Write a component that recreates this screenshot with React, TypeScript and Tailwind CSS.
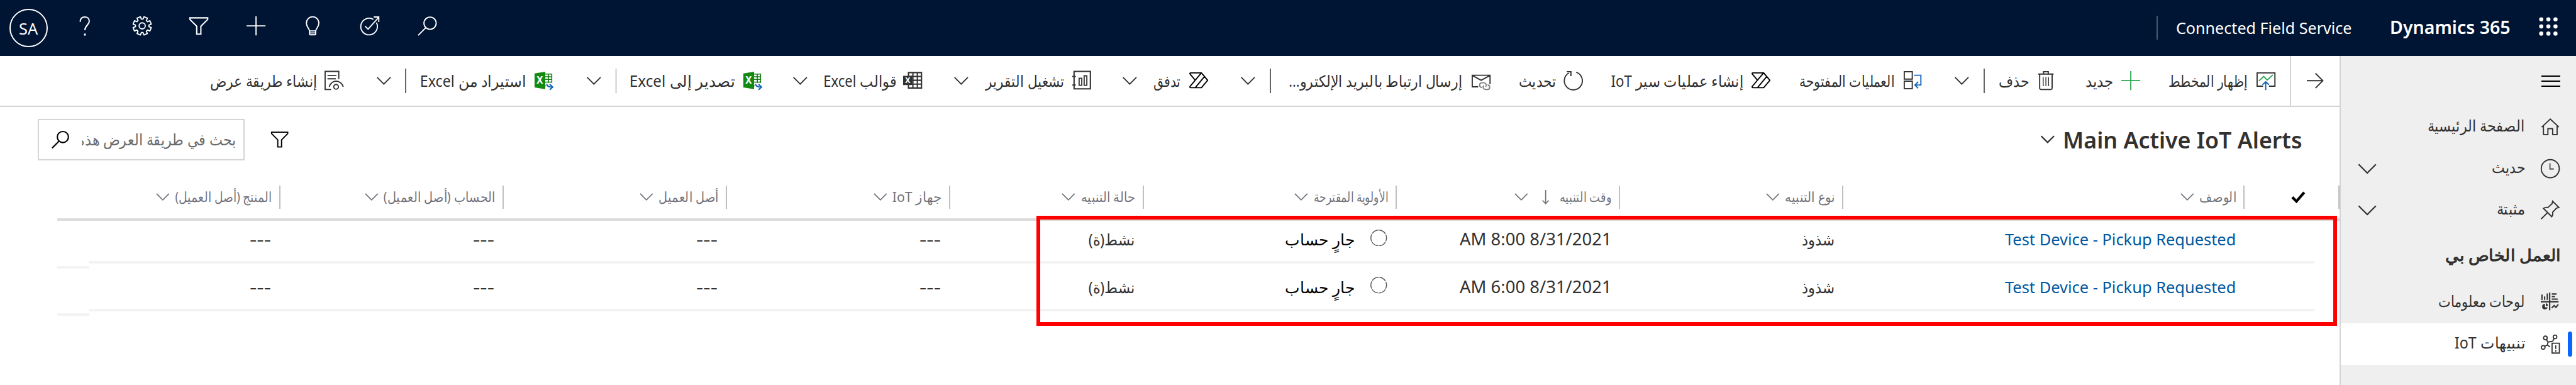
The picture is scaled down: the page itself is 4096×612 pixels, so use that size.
import { useLayoutEffect, useRef } from "react";
import type { ReactNode } from "react";

/* One line of text that is condensed or stretched to the width of its box. */
function Fit({ className, ltr, children }: { className: string; ltr?: boolean; children: ReactNode }) {
  const box = useRef<HTMLSpanElement>(null);
  const line = useRef<HTMLSpanElement>(null);
  useLayoutEffect(() => {
    if (!box.current || !line.current) return;
    line.current.style.transform = "none";
    const natural = line.current.getBoundingClientRect().width;
    const wanted = box.current.getBoundingClientRect().width;
    if (natural > 0) line.current.style.transform = `scaleX(${wanted / natural})`;
  }, []);
  return (
    <span ref={box} dir={ltr ? "ltr" : "rtl"} className={`block shrink-0 whitespace-nowrap ${className}`}>
      <span ref={line} className={ltr ? "inline-block origin-left" : "inline-block origin-right"}>
        {children}
      </span>
    </span>
  );
}

function Icon({ className = "size-8", sw = 2, children }: { className?: string; sw?: number; children: ReactNode }) {
  return (
    <svg viewBox="0 0 32 32" className={`block shrink-0 overflow-visible ${className}`} fill="none" stroke="currentColor" strokeWidth={sw}>
      {children}
    </svg>
  );
}

function Chevron({ className, sw = 2 }: { className: string; sw?: number }) {
  return (
    <svg viewBox="0 0 24 14" className={`block shrink-0 overflow-visible ${className}`} fill="none" stroke="currentColor" strokeWidth={sw}>
      <path d="M.7 1 12 12.3 23.3 1" />
    </svg>
  );
}

/* ---------- header icons ---------- */

const Gear = () => {
  const pts: string[] = [];
  const teeth = 8;
  for (let i = 0; i < teeth; i++) {
    const c = ((i + 0.5) * 2 * Math.PI) / teeth;
    const at = (r: number, a: number) => `${(16 + r * Math.cos(c + a)).toFixed(2)} ${(16 + r * Math.sin(c + a)).toFixed(2)}`;
    pts.push(at(11.4, -0.27), at(15.6, -0.2), at(15.6, 0.2), at(11.4, 0.27));
  }
  return (
    <Icon>
      <path d={`M${pts.join("L")}Z`} strokeLinejoin="round" />
      <circle cx="16" cy="16" r="5.2" />
    </Icon>
  );
};

const Help = () => (
  <Icon sw={2.2}>
    <path d="M8 9.2C8 3.6 11.3 1 15.6 1 20 1 23.3 3.6 23.3 8c0 6.5-7.4 7.2-7.4 15" />
    <path d="M15.9 29v3.4" strokeWidth="3" />
  </Icon>
);

const Funnel = ({ className }: { className?: string }) => (
  <Icon className={className} sw={2.2}>
    <path d="M1 2.5h30v2.7L19.5 16.7V30h-7V16.7L1 5.2Z" />
  </Icon>
);

const Plus = ({ className }: { className?: string }) => (
  <Icon className={className}>
    <path d="M16 0v32M0 16h32" />
  </Icon>
);

const Bulb = () => (
  <Icon>
    <path d="M12 31h8a1.2 1.2 0 0 0 1.2-1.2V25c0-4 5.3-7 5.3-13.5A10.5 10.8 0 0 0 5.500 11.500C5.500 18 10.800 21 10.800 25v4.800A1.200 1.200 0 0 0 12 31ZM11 24.500h10M11 28h10" />
  </Icon>
);

const Target = () => (
  <Icon>
    <path d="M22 5.2A14 14 0 1 0 27 10.500M8 16.500l5 5L31 1.500M22.500 1H31v8.500" />
  </Icon>
);

const Search = ({ className, sw }: { className?: string; sw?: number }) => (
  <Icon className={className} sw={sw}>
    <circle cx="21" cy="11.5" r="10.3" />
    <path d="M14 19 1 32" />
  </Icon>
);

/* ---------- command bar icons ---------- */

const ShowChart = () => (
  <Icon>
    <path d="M11 25.5H1V3h30v22.5H21" />
    <path d="m4 16.5 8-7.5 6 6L27.5 6.500" stroke="#27a84f" />
    <path d="M15.5 32V18.500M10 23l5.500-5 5.500 5" stroke="#0f62b5" />
  </Icon>
);

const Trash = () => (
  <Icon>
    <path d="M3 5h26M5.5 5v23.5A2.5 2.5 0 0 0 8 31h16a2.5 2.5 0 0 0 2.500-2.500V5M12 5V1h8v4" />
    <path d="M11.5 10v15.5M16 10v15.500M20.500 10v15.500" strokeWidth="1.5" />
  </Icon>
);

const Process = () => (
  <Icon>
    <path d="M2 1h13.5v12.5H2ZM2 17h13.500v12.500H2Z" />
    <path d="M18.5 7H30v16.500H20.500M25.500 18l-5.500 5.500 5.500 5.500" stroke="#0f62b5" />
  </Icon>
);

const Flow = () => (
  <Icon>
    <g stroke="#000" strokeLinejoin="round">
      <path d="M2.5 3H20.5L31 15.5 20.5 28H2.500C1 28 .600 26.500 1.500 25.500L20.200 3.200M2.500 3C1 3 .600 4 1.500 5.200L10 15.300M10.500 27.500 25.500 9.300" />
    </g>
  </Icon>
);

const Refresh = () => (
  <Icon>
    <path d="M20.5 2A15.200 15.200 0 1 1 8 3.200M4.500 1h7v7.500" />
  </Icon>
);

const MailLink = () => (
  <Icon>
    <path d="M11 26.500H1V7h30v15M1.500 7.500 16 15.500l14.500-8" />
    <g stroke="#808080">
      <path d="M17 27.500h-.500a4 4 0 0 1 0-7.800H21a4 4 0 0 1 2.500 6.800" />
      <path d="M27 23.300h.500a4 4 0 0 1 0 7.700H23a4 4 0 0 1-2.500-6.800" />
    </g>
  </Icon>
);

const Report = () => (
  <Icon>
    <path d="M3 .5h27.500v29.500H3Z" strokeWidth="2.2" />
    <path d="M0 9h6M0 23.500h6M11.500 12h4.500v12h-4.500ZM20 8h4.500v16H20Z" />
  </Icon>
);

const ExcelTemplate = () => (
  <Icon>
    <path d="M9 2.500h22v26H9ZM9 9h22M9 15.500h22M9 22h22M16.500 2.500v26M24 2.500v26" strokeWidth="2.2" />
    <path d="M0 8h15.500v15.500H0Z" fill="currentColor" stroke="none" />
    <text x="7.7" y="20.5" textAnchor="middle" fill="#fff" stroke="none" className="text-[13px] font-bold">X</text>
  </Icon>
);

const Excel = () => (
  <Icon>
    <path d="M18 5h11v20H18M23.500 5v17M18 9.500h11M18 14h11M18 18.500h11" stroke="#107c10" strokeWidth="1.6" />
    <path d="M0 4 18 1v29.500L0 27.500Z" fill="#128a12" stroke="none" />
    <text x="8.7" y="21.5" textAnchor="middle" fill="#fff" stroke="none" className="text-[16px] font-bold">X</text>
    <path d="M19 20h13v12H19Z" fill="#fff" stroke="none" />
    <path d="M20.500 21.500c0 4 3 5.500 9.500 5.500M25.500 22l5 5-5 4.500" stroke="#0f62b5" strokeWidth="2.2" />
  </Icon>
);

const CreateView = () => (
  <Icon>
    <path d="M11 31H1V.5h23v13M5 7.500h15M5 13h14" />
    <path d="M8 26.500C9.500 21 14 17 19.500 17S30 21 31.500 26.500" />
    <circle cx="19.5" cy="26.500" r="4" />
  </Icon>
);

/* ---------- site map icons ---------- */

const Home = () => (
  <Icon>
    <path d="M1.500 16 16 2.500 30.500 16M4.500 13.500V28.500H12V18.500h8v10h7.500V13.500" />
  </Icon>
);

const Clock = () => (
  <Icon>
    <circle cx="16" cy="16" r="15.2" />
    <path d="M15.500 7v9.500H22" strokeWidth="1.7" />
  </Icon>
);

const Pin = () => (
  <Icon>
    <path d="M.5 31 11 20.500M20 1l10.500 10.500-4 1-6.500 7c.500 3 0 5.500-1.500 7.500L4.500 13c2-1.500 4.500-2 7.500-1.500l7-6.500Z" />
  </Icon>
);

const Dashboards = () => (
  <Icon>
    <path d="M15 0v30M0 15.500h30" strokeWidth="2.2" />
    <path d="M2 3.500v9M6.500 6.500v6M11 1.500v11M18.500 2.500h8M18.500 6.800h5.500M18.500 11.200h10" strokeWidth="2.2" />
    <path d="m18.500 26 4-4 3 3 4-5" strokeWidth="2.2" />
    <path d="M7 19a4.700 4.700 0 1 0 4.500 6H7Z" fill="currentColor" stroke="none" />
    <path d="M8.500 18v4.500h3.300A4 4 0 0 0 8.500 18Z" fill="currentColor" stroke="none" />
  </Icon>
);

const IotAlert = () => (
  <Icon sw={1.9}>
    <circle cx="7.7" cy="5.500" r="3.100" />
    <circle cx="24" cy="3.700" r="3.100" />
    <circle cx="4" cy="21.500" r="3.100" />
    <path d="M9.500 8.200 12 12.200M22.500 6.700 20 11l-7.800 1.500-1.200 5L6.500 19.500M11 17.500l4.500 3" />
    <path d="M19 14.500h12.300v16.500H19Z" />
    <path d="M25.200 18v6M25.200 26v2.500" />
  </Icon>
);

const Waffle = () => (
  <svg viewBox="0 0 32 32" className="block size-8" fill="#fff">
    {[4, 16, 28].map((y) => [4, 16, 28].map((x) => <circle key={`${x}-${y}`} cx={x} cy={y} r="3.5" />))}
  </svg>
);

/* ---------- regions ---------- */

function Header() {
  return (
    <header className="flex h-[94px] items-center bg-[#001433] text-white">
      <div className="ml-4 flex size-16 items-center justify-center rounded-full border-[2.2px] border-white pt-1 text-[26px] leading-none">
        <Fit ltr className="w-8">SA</Fit>
      </div>
      <div className="ml-[47px] flex gap-16 pb-1.5">
        <Help />
        <Gear />
        <Funnel />
        <Plus />
        <Bulb />
        <Target />
        <Search />
      </div>
      <div className="ml-auto h-10 w-0.5 bg-[#4a5872]" />
      <Fit ltr className="ml-[30px] w-[296px] pt-0.5 text-[27px] leading-10">Connected Field Service</Fit>
      <Fit ltr className="ml-[65px] w-[203px] text-[30px] leading-10 font-semibold">Dynamics 365</Fit>
      <div className="mr-[30px] ml-12 pb-1">
        <Waffle />
      </div>
    </header>
  );
}

const Divider = ({ className }: { className: string }) => <div className={`h-[42px] w-0.5 bg-[#666] ${className}`} />;

function CommandBar() {
  return (
    <div dir="rtl" className="flex h-[86px] shrink-0 items-center border-b-[2.2px] border-[#d4d4d4] text-[26px] leading-10 text-[#323130]">
      <div className="flex h-full w-[84px] items-center border-l-[2.2px] border-[#d4d4d4] pr-[27px]">
        <svg viewBox="0 0 28 26" className="block h-[26px] w-7" fill="none" stroke="currentColor" strokeWidth="2">
          <path d="M0 13h27M14.500.500 27 13 14.500 25.500" />
        </svg>
      </div>
      <div className="ms-6"><ShowChart /></div>
      <Fit className="ms-[15px] w-[133px] pt-0.5">إظهار المخطط</Fit>
      <div className="ms-12 text-[#27a84f]"><Plus /></div>
      <Fit className="ms-[13px] w-[47px] pt-0.5">جديد</Fit>
      <div className="ms-[51px]"><Trash /></div>
      <Fit className="ms-3 w-[51px] pt-0.5">حذف</Fit>
      <Divider className="ms-6" />
      <Chevron className="ms-6 h-3.5 w-6" />
      <div className="ms-[55px]"><Process /></div>
      <Fit className="ms-[15px] w-40 pt-0.5">العمليات المفتوحة</Fit>
      <div className="ms-12"><Flow /></div>
      <Fit className="ms-3.5 w-[223px] pt-0.5">إنشاء عمليات سير IoT</Fit>
      <div className="ms-[47px]"><Refresh /></div>
      <Fit className="ms-3.5 w-[63px] pt-0.5">تحديث</Fit>
      <div className="ms-[47px]"><MailLink /></div>
      <Fit className="ms-4 w-[292px] pt-0.5">إرسال ارتباط بالبريد الإلكترو...</Fit>
      <Divider className="ms-[30px]" />
      <Chevron className="ms-[25px] h-3.5 w-6" />
      <div className="ms-[55px]"><Flow /></div>
      <Fit className="ms-3.5 w-[46px] pt-0.5">تدفق</Fit>
      <Chevron className="ms-7 h-3.5 w-6" />
      <div className="ms-[52px]"><Report /></div>
      <Fit className="ms-3.5 w-[133px] pt-0.5">تشغيل التقرير</Fit>
      <Chevron className="ms-[29px] h-3.5 w-6" />
      <div className="ms-[53px]"><ExcelTemplate /></div>
      <Fit className="ms-3 w-[123px] pt-0.5">قوالب Excel</Fit>
      <Chevron className="ms-[27px] h-3.5 w-6" />
      <div className="ms-[51px]"><Excel /></div>
      <Fit className="ms-3.5 w-[178px] pt-0.5">تصدير إلى Excel</Fit>
      <Divider className="ms-[22px]" />
      <Chevron className="ms-6 h-3.5 w-6" />
      <div className="ms-14"><Excel /></div>
      <Fit className="ms-3.5 w-[179px] pt-0.5">استيراد من Excel</Fit>
      <Divider className="ms-[23px]" />
      <Chevron className="ms-6 h-3.5 w-6" />
      <div className="ms-14"><CreateView /></div>
      <Fit className="ms-[13px] w-[180px] pt-0.5">إنشاء طريقة عرض</Fit>
    </div>
  );
}

function TitleBar() {
  return (
    <div dir="rtl" className="flex h-[110px] items-center pr-[63px] pl-16">
      <Fit ltr className="w-[403px] pt-0.5 text-[38px] leading-[50px] font-semibold text-[#323130]">Main Active IoT Alerts</Fit>
      <Chevron className="ms-3.5 h-3.5 w-[23px] text-[#323130]" sw={2.5} />
      <Funnel className="ms-auto size-[29px] text-black" />
      <div className="ms-11 flex h-[70px] w-[348px] items-center border-[2.2px] border-[#d4d4d4] pr-3">
        <div className="w-[260px] overflow-hidden">
          <Fit className="w-[267px] text-[26px] leading-[50px] text-[#6b6b6b]">بحث في طريقة العرض هذه</Fit>
        </div>
        <Search className="ms-[22px] size-[29px] text-black" sw={2.5} />
      </div>
    </div>
  );
}

const columns = [
  { label: "الوصف", col: "w-[676px]", text: "w-[62px]" },
  { label: "نوع التنبيه", col: "w-[376px]", text: "w-[84px]" },
  { label: "وقت التنبيه", col: "w-[376px]", text: "w-[88px]", sorted: true },
  { label: "الأولوية المقترحة", col: "w-[426px]", text: "w-[126px]" },
  { label: "حالة التنبيه", col: "w-[326px]", text: "w-[92px]" },
  { label: "جهاز IoT", col: "w-[376px]", text: "w-[83px]" },
  { label: "أصل العميل", col: "w-[376px]", text: "w-[101px]" },
  { label: "الحساب (أصل العميل)", col: "w-[376px]", text: "w-[188px]" },
  { label: "المنتج (أصل العميل)", col: "w-[376px]", text: "w-[163px]" },
];

function GridHeader() {
  return (
    <div dir="rtl" className="ml-24 flex h-[82px] items-start border-b-[4.3px] border-[#dcdcdc] pt-[22px] text-[23px] leading-8 text-[#73737c]">
      <div className="flex h-10 w-[160px] items-center border-r-[2.2px] border-[#c0c0c0] pr-[55px]">
        <svg viewBox="0 0 24 20" className="block h-5 w-6" fill="none" stroke="#000" strokeWidth="4.5">
          <path d="m2 10 7 7L22 2" />
        </svg>
      </div>
      {columns.map((c) => (
        <div key={c.label} className={`flex h-10 shrink-0 items-center border-r-[2.2px] border-[#c0c0c0] pr-3 ${c.col}`}>
          <Fit className={c.text}>{c.label}</Fit>
          {c.sorted && (
            <svg viewBox="0 0 12 24" className="ms-[17px] me-[15px] block h-6 w-3" fill="none" stroke="currentColor" strokeWidth="1.8">
              <path d="M6 0v22.500M.800 17.500 6 23l5.200-5.500" />
            </svg>
          )}
          <Chevron className="ms-[9px] h-[13px] w-[23px]" />
        </div>
      ))}
    </div>
  );
}

function Row({ time }: { time: string }) {
  return (
    <div dir="rtl" className="flex h-20 items-start pr-[42px]">
      <div className="flex h-[72px] w-[3748px] shrink-0 items-center border-b-[4.3px] border-[#f3f3f3] pr-[118px] pb-1 text-[27px] leading-10 text-[#323130]">
        <div className="w-[676px] shrink-0 pr-[15px]">
          <Fit ltr className="w-[389px] text-[#0058a0]">Test Device - Pickup Requested</Fit>
        </div>
        <div className="w-[376px] shrink-0 pr-[15px]">
          <Fit className="w-[55px]">شذوذ</Fit>
        </div>
        <div className="w-[376px] shrink-0 pr-3.5">
          <Fit ltr className="w-64 text-[28px]">{time}</Fit>
        </div>
        <div className="flex w-[426px] shrink-0 items-center pr-4">
          <svg viewBox="0 0 28 28" className="mb-[7px] block size-7" fill="none" stroke="#555" strokeWidth="1.5">
            <circle cx="14" cy="14" r="13.2" strokeDasharray="12.500 1.320" strokeDashoffset="6.200" />
          </svg>
          <Fit className="ms-[27px] w-[117px] text-black">جارٍ حساب</Fit>
        </div>
        <div className="w-[326px] shrink-0 pr-[15px]">
          <Fit className="w-[78px]">نشط(ة)</Fit>
        </div>
        {["device", "asset", "account", "product"].map((k) => (
          <div key={k} className={k === "product" ? "shrink-0 pr-4" : "w-[376px] shrink-0 pr-4"}>
            <Fit ltr className="w-9">---</Fit>
          </div>
        ))}
      </div>
      <div className="h-20 w-[54px] shrink-0 border-b-[4.3px] border-[#f3f3f3]" />
    </div>
  );
}

function NavItem({ icon, width, label, expandable }: { icon: ReactNode; width: string; label: string; expandable?: boolean }) {
  return (
    <div className="flex h-[70px] items-center pr-[27px] pl-7">
      {icon}
      <Fit className={`ms-[27px] pb-1 ${width}`}>{label}</Fit>
      {expandable && <Chevron className="ms-auto h-[18px] w-8" sw={1.8} />}
    </div>
  );
}

function SiteMap() {
  return (
    <nav dir="rtl" className="w-[396px] shrink-0 bg-[#efefef] text-[26px] leading-10 text-[#323130]">
      <div className="flex h-[85px] items-center pr-[26px]">
        <div className="flex w-8 flex-col gap-[6px]">
          <div className="h-[2.2px] bg-black" />
          <div className="h-[2.2px] bg-black" />
          <div className="h-[2.2px] bg-black" />
        </div>
      </div>
      <NavItem icon={<Home />} width="w-[164px]" label="الصفحة الرئيسية" />
      <NavItem icon={<Clock />} width="w-14" label="حديث" expandable />
      <NavItem icon={<Pin />} width="w-12" label="مثبتة" expandable />
      <div className="flex h-[85px] items-center pr-[26px] pb-1">
        <Fit className="w-[195px] text-[28px] font-semibold">العمل الخاص بي</Fit>
      </div>
      <NavItem icon={<Dashboards />} width="w-[146px]" label="لوحات معلومات" />
      <div className="relative bg-white">
        <NavItem icon={<IotAlert />} width="w-[119px]" label="تنبيهات IoT" />
        <div className="absolute top-3.5 right-1.5 h-[42px] w-2 rounded-full bg-[#0a66ff]" />
      </div>
    </nav>
  );
}

export default function App() {
  return (
    <div className="h-screen w-screen overflow-hidden bg-white font-['Noto_Sans','Liberation_Sans',sans-serif]">
      <div className="flex h-[650px] w-[4338px] flex-col [zoom:0.94421]">
        <Header />
        <div className="flex flex-1">
          <main className="relative w-[3942px] shrink-0 border-r-[2.2px] border-[#d4d4d4]">
            <CommandBar />
            <TitleBar />
            <GridHeader />
            <Row time="AM 8:00 8/31/2021" />
            <Row time="AM 6:00 8/31/2021" />
            <div className="absolute top-[269px] left-[1745px] h-[186px] w-[2191px] border-[6.4px] border-[#ff0000]" />
          </main>
          <SiteMap />
        </div>
      </div>
    </div>
  );
}
